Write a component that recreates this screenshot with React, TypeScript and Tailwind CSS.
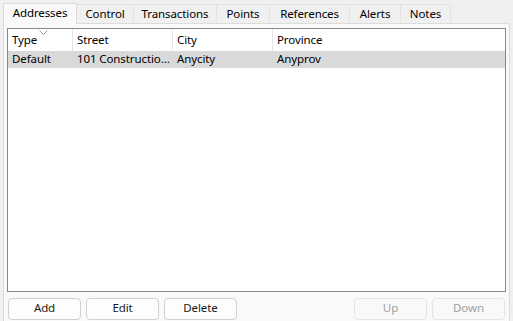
import React from "react";

const tabs = [
  { label: "Addresses", w: 74 },
  { label: "Control", w: 57 },
  { label: "Transactions", w: 83 },
  { label: "Points", w: 53 },
  { label: "References", w: 80 },
  { label: "Alerts", w: 51 },
  { label: "Notes", w: 50 },
];

const cols = [
  { label: "Type", w: 65 },
  { label: "Street", w: 100 },
  { label: "City", w: 100 },
  { label: "Province", w: 232 },
];

function Btn({ label, disabled }: { label: string; disabled?: boolean }) {
  return (
    <div
      className={`w-[73px] h-[22px] flex items-center justify-center rounded-[4px] border pb-[2px] ${
        disabled ? "border-[#e5e5e5] bg-[#f9f9f9] text-[#a0a0a0]" : "border-[#d0d0d0] bg-[#fdfdfd] text-[#1a1a1a]"
      }`}
    >
      {label}
    </div>
  );
}

export default function App() {
  return (
    <div
      className="w-[513px] h-[321px] bg-[#f0f0f0] overflow-hidden text-[11.5px] tracking-[-0.1px] text-black whitespace-nowrap"
      style={{ fontFamily: '"Noto Sans", "Open Sans", sans-serif' }}
    >
      <div className="flex items-end pl-[3px] pt-[2px] h-[23px]">
        {tabs.map((t, i) =>
          i === 0 ? (
            <div
              key={t.label}
              style={{ width: t.w }}
              className="relative z-10 h-[21px] bg-[#f9f9f9] border border-b-0 border-[#dcdcdc] flex items-center justify-center -mb-px pb-[2px]"
            >
              {t.label}
            </div>
          ) : (
            <div
              key={t.label}
              style={{ width: t.w }}
              className="h-[19px] bg-[#f0f0f0] border border-l-0 border-b-0 border-[#e3e3e3] flex items-center justify-center pb-[1px]"
            >
              {t.label}
            </div>
          )
        )}
      </div>
      <div className="ml-[3px] mr-[3px] h-[300px] bg-[#f9f9f9] border border-[#dcdcdc] px-[3px] pt-[4px] flex flex-col">
        <div className="h-[264px] bg-white border border-[#828790] flex flex-col">
          <div className="flex h-[22px] relative">
            {cols.map((c, i) => (
              <div
                key={c.label}
                style={{ width: c.w }}
                className={`h-full flex items-center pl-[4px] pb-[1px] ${i < 3 ? "border-r border-[#e5e5e5]" : ""}`}
              >
                {c.label}
              </div>
            ))}
            <svg className="absolute left-[31px] top-[1px]" width="9" height="5" viewBox="0 0 9 5">
              <path d="M0.5 0.5 L4.5 4.5 L8.5 0.5" fill="none" stroke="#9a9a9a" strokeWidth="1" />
            </svg>
          </div>
          <div className="flex h-[17px] bg-[#d9d9d9]">
            <div className="w-[65px] pl-[4px] pb-[2px] flex items-center overflow-hidden">Default</div>
            <div className="w-[100px] pl-[4px] pb-[2px] flex items-center overflow-hidden">101 Constructio...</div>
            <div className="w-[100px] pl-[4px] pb-[2px] flex items-center overflow-hidden">Anycity</div>
            <div className="flex-1 pl-[4px] pb-[2px] flex items-center overflow-hidden">Anyprov</div>
          </div>
        </div>
        <div className="flex items-center mt-[6px] pl-[1px] pr-[1px]">
          <div className="flex gap-[5px]">
            <Btn label="Add" />
            <Btn label="Edit" />
            <Btn label="Delete" />
          </div>
          <div className="flex gap-[5px] ml-auto">
            <Btn label="Up" disabled />
            <Btn label="Down" disabled />
          </div>
        </div>
      </div>
    </div>
  );
}
